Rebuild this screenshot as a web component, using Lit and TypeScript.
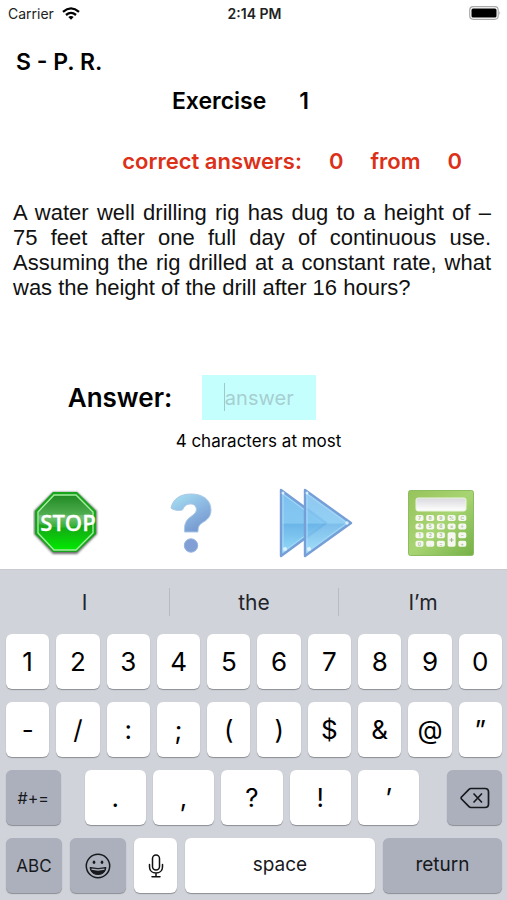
import { LitElement, html, css, svg } from "lit";
import { customElement, property } from "lit/decorators.js";

const stopIcon = svg`
  <svg viewBox="0 0 66 66" width="66" height="66" aria-hidden="true">
    <defs>
      <linearGradient id="sg" x1="0" y1="0" x2="0" y2="1">
        <stop offset="0" stop-color="#1f8a22" /><stop offset=".42" stop-color="#58b458" />
        <stop offset=".56" stop-color="#17a417" /><stop offset="1" stop-color="#00ea00" />
      </linearGradient>
      <filter id="sb" x="-20%" y="-20%" width="140%" height="140%"><feGaussianBlur stdDeviation="1.2" /></filter>
    </defs>
    <path d="M20 2H44L64 21V44L44 64H20L1 44V21Z" fill="#333" opacity=".7" filter="url(#sb)" />
    <path d="M20 2H44L63 21V44L44 62H20L2 44V21Z" fill="#16a51b" />
    <path d="M21 5H43L60 22V43L43 60H21L5 43V22Z" fill="url(#sg)" stroke="#a5eda0" stroke-width="1.4" />
    <path d="M6 34Q32 42 59 32V25H6Z" fill="#fff" opacity=".14" />
    <text x="35" y="41" text-anchor="middle" font-family="Open Sans, Noto Sans, sans-serif" font-weight="600" font-size="22" fill="#fff" stroke="#fff" stroke-width=".3">STOP</text>
  </svg>`;

const helpIcon = svg`
  <svg viewBox="0 0 42 60" width="42" height="60" aria-hidden="true">
    <defs>
      <linearGradient id="qg" x1="0" y1="0" x2=".6" y2="1">
        <stop offset="0" stop-color="#a9e4f1" /><stop offset=".5" stop-color="#8fbce4" /><stop offset="1" stop-color="#7799d0" />
      </linearGradient>
    </defs>
    <path d="M1 15C3 6 10 1 21 1C33 1 41 7 41 17C41 24 37 27 32 30C29 32 28 34 28 39H14.500C14 31 16 27 21 23.500C26 20 27 18 26 14.500C25 10 18 10 15 13C13 15 13 17 12 17C8 18 3 17 1 15Z" fill="url(#qg)" stroke="#a9c9e8" stroke-width="1" />
    <circle cx="21" cy="52.500" r="6.700" fill="#829fd5" stroke="#94b4e0" />
  </svg>`;

const nextIcon = svg`
  <svg viewBox="0 0 74 70" width="74" height="70" aria-hidden="true">
    <defs>
      <linearGradient id="ng" x1="0" y1="0" x2="0" y2="1">
        <stop offset="0" stop-color="#7fc0ee" /><stop offset=".5" stop-color="#84c8f2" />
        <stop offset=".52" stop-color="#6cb5e8" /><stop offset="1" stop-color="#98defa" />
      </linearGradient>
    </defs>
    <g stroke-linejoin="round">
      <path d="M2 2L47 35L2 68Z" fill="url(#ng)" stroke="#769fd8" stroke-width="2.400" />
      <path d="M4 6L43 35L4 64Z" fill="none" stroke="#a9daf8" stroke-width="1" />
      <path d="M26 2L72 35L26 68Z" fill="url(#ng)" fill-opacity=".88" stroke="#769fd8" stroke-width="2.400" />
      <path d="M28 6L68 35L28 64Z" fill="none" stroke="#a9daf8" stroke-width="1" />
    </g>
    <g fill="#eaf8ff" opacity=".85">
      <circle cx="4" cy="5" r="1.500" /><circle cx="28" cy="5" r="1.500" /><circle cx="68" cy="35" r="1.700" />
      <circle cx="6" cy="61" r="2" /><circle cx="30" cy="61" r="2" />
    </g>
  </svg>`;

const calcRows = ["789%C", "456×÷", "123 −", "0.= +"];
const calcIcon = svg`
  <svg viewBox="0 0 66 66" width="66" height="66" aria-hidden="true">
    <defs>
      <linearGradient id="cg" x1="0" y1="0" x2="1" y2="1">
        <stop offset="0" stop-color="#96c35a" /><stop offset=".5" stop-color="#a8d573" /><stop offset="1" stop-color="#74b046" />
      </linearGradient>
      <linearGradient id="cd" x1="0" y1="0" x2="0" y2="1">
        <stop offset="0" stop-color="#d9d9de" /><stop offset="1" stop-color="#fff" />
      </linearGradient>
    </defs>
    <rect x=".500" y=".500" width="65" height="65" rx="2" fill="url(#cg)" stroke="#8dbd60" />
    <rect x="8" y="8" width="50" height="13" rx="2" fill="url(#cd)" stroke="#e9f3dc" />
    ${calcRows.map((row, r) => [...row].map((c, i) => i === 3 && r > 1 ? null : svg`
      <rect x=${7.5 + i * 10.7} y=${25 + r * 8.6} width="8" height="6" rx="1.800" fill="#f6f8f0" />
      <text x=${11.5 + i * 10.7} y=${29.8 + r * 8.6} text-anchor="middle" font-family="Inter, sans-serif" font-weight="600" font-size="5" fill="#a9bb93">${c}</text>`))}
    <rect x="39.600" y="42.200" width="8" height="14.600" rx="1.800" fill="#f6f8f0" />
    <path d="M41.600 50H45.600M43.600 48V52" stroke="#a0b488" />
  </svg>`;

const emojiIcon = svg`
  <svg viewBox="0 0 26 26" width="26" height="26" fill="none" stroke="#17191d" aria-hidden="true">
    <circle cx="13" cy="13" r="11.700" stroke-width="1.500" />
    <g fill="#17191d" stroke="none"><ellipse cx="9" cy="9.300" rx="1.300" ry="1.700" /><ellipse cx="17" cy="9.300" rx="1.300" ry="1.700" /></g>
    <path d="M5 14.500Q13 16.500 21 14.500Q20 21.500 13 21.500Q6 21.500 5 14.500Z" fill="#17191d" />
    <path d="M6.500 16.200Q13 17.800 19.500 16.200" stroke="#abb0bc" stroke-width="1.300" />
  </svg>`;

const micIcon = svg`
  <svg viewBox="0 0 16 24" width="16" height="24" fill="none" stroke="#111" stroke-width="1.500" stroke-linecap="round" aria-hidden="true">
    <rect x="4.500" y="1" width="7" height="15" rx="3.500" />
    <path d="M1.500 10.500V13C1.500 21 14.500 21 14.500 13V10.500M8 19V22.500M4 22.700H12" />
  </svg>`;

const deleteIcon = svg`
  <svg viewBox="0 0 30 22" width="30" height="22" fill="none" stroke="#17191d" stroke-width="1.700" stroke-linejoin="round" stroke-linecap="round" aria-hidden="true">
    <path d="M11 1.500H25Q28.500 1.500 28.500 5V17Q28.500 20.500 25 20.500H11Q9.800 20.500 9 19.700L1.500 12Q.8 11 1.500 10L9 2.300Q9.800 1.500 11 1.500Z" />
    <path d="M14 7L21.500 15M21.500 7L14 15" />
  </svg>`;

@customElement("status-bar")
class StatusBar extends LitElement {
  static styles = css`
    :host { display: grid; grid-template-columns: 1fr auto 1fr; align-items: center; height: 26px; padding: 0 6px 0 8px; font-size: 14px; color: #222; }
    .carrier { display: flex; align-items: center; gap: 8px; }
    .time { font-weight: 600; }
    .battery { justify-self: end; }
    svg { display: block; }
  `;
  render() {
    return html`
      <div class="carrier"><span>Carrier</span>
        <svg viewBox="0 0 18 13" width="18" height="13" aria-label="Wi-Fi">
          <g fill="none" stroke="#000" stroke-width="2.300"><path d="M1 4.800Q9 -2 17 4.800M4 8Q9 3.800 14 8" /></g>
          <path d="M6.300 10Q9 8 11.700 10L9 12.800Z" />
        </svg>
      </div>
      <span class="time">2:14 PM</span>
      <svg class="battery" viewBox="0 0 32 14" width="32" height="14" aria-label="Battery full">
        <rect x=".700" y=".700" width="28.500" height="12.600" rx="3.500" fill="#fff" stroke="#aaa" stroke-width="1.200" />
        <rect x="2.500" y="2.500" width="25" height="9" rx="1.500" />
        <path d="M30.500 5Q32 7 30.500 9Z" fill="#999" />
      </svg>`;
  }
}

@customElement("key-board")
class KeyBoard extends LitElement {
  static styles = css`
    :host { display: block; background: #d1d3da; border-top: 1px solid #c9cad0; padding: 0 5px 7px 6px; box-sizing: border-box; }
    button { font: inherit; color: inherit; border: 0; padding: 0; margin: 0; background: none; }
    .suggestions { display: grid; grid-template-columns: 1fr 1fr 1fr; height: 64px; align-items: center; font-size: 21px; margin: 0 -5px 0 -6px; color: #22242a; }
    .suggestions button { height: 28px; border-left: 1px solid #b8bbc3; }
    .suggestions button:first-child { border-left: 0; }
    .rows { display: flex; flex-direction: column; gap: 13px; }
    .row { display: flex; gap: 7px; }
    .key { flex: 1 1 0; min-width: 0; height: 55px; border-radius: 6px; background: #fff; box-shadow: 0 1px 1px #8b8d94; font-size: 26px; color: #000; display: flex; align-items: center; justify-content: center; }
    .dark { background: #abb0bc; color: #17191d; }
    .small { flex: 0 0 11%; font-size: 16px; }
    .word { font-size: 19px; color: #17191d; padding-bottom: 2px; }
    .middle { flex: 1; display: flex; gap: 7px; margin: 0 21px 0 17px; }
    .abc { flex: 0 0 56px; font-size: 17px; }
    .mic { flex: 0 0 43px; }
    .return { flex: 0 0 24%; }
    .bottom { gap: 8px; }
  `;
  render() {
    const key = (k: string) => html`<button class="key">${k}</button>`;
    return html`
      <div class="suggestions"><button>I</button><button>the</button><button>I’m</button></div>
      <div class="rows">
        <div class="row">${[..."1234567890"].map(key)}</div>
        <div class="row">${[..."-/:;()$&@”"].map(key)}</div>
        <div class="row">
          <button class="key dark small">#+=</button>
          <div class="middle">${[...".,?!’"].map(key)}</div>
          <button class="key dark small" aria-label="Delete">${deleteIcon}</button>
        </div>
        <div class="row bottom">
          <button class="key dark abc">ABC</button>
          <button class="key dark abc" aria-label="Emoji">${emojiIcon}</button>
          <button class="key mic" aria-label="Dictate">${micIcon}</button>
          <button class="key word">space</button>
          <button class="key dark word return">return</button>
        </div>
      </div>`;
  }
}

@customElement("app-root")
class AppRoot extends LitElement {
  @property({ type: Number }) exercise = 1;
  @property({ type: Number }) correct = 0;
  @property({ type: Number }) total = 0;

  static styles = css`
    :host { display: flex; flex-direction: column; min-height: 100vh; background: #fff; color: #000; font-family: Inter, "Liberation Sans", sans-serif; }
    main { flex: 1; display: flex; flex-direction: column; }
    h1, h2, p { margin: 0; font-weight: 600; }
    h1 { font-size: 23px; line-height: 28px; padding: 22px 16px 0; }
    h2 { display: flex; justify-content: center; gap: 33px; font-size: 23px; line-height: 28px; margin-top: 11px; padding-right: 26px; }
    .score { display: flex; justify-content: flex-end; gap: 27px; margin-top: 32px; padding-right: 45px; font-size: 22px; line-height: 28px; font-weight: 600; color: #dc3018; }
    .problem { font: 22px/25px "Liberation Sans", Arial, sans-serif; text-align: justify; color: #111; margin: 25px 16px 0 13px; }
    .entry { display: flex; justify-content: center; align-items: center; gap: 30px; margin-top: 75px; padding-right: 123px; }
    .entry label { font-size: 26px; font-weight: 600; }
    .field { position: relative; width: 114px; height: 45px; }
    input { width: 100%; height: 100%; box-sizing: border-box; border: 0; padding: 0; background: #c5fffd; font: 20px Inter, sans-serif; text-align: center; outline: none; }
    input::placeholder { color: #a6cfd1; opacity: 1; }
    .caret { position: absolute; left: 22px; top: 8px; width: 1px; height: 28px; background: #9cc9cc; }
    .hint { text-align: center; font-size: 17px; line-height: 20px; font-weight: 400; margin-top: 11px; padding-left: 10px; }
    .actions { display: grid; grid-template-columns: repeat(4, 1fr); justify-items: center; align-items: center; margin: 37px 4px 9px 4px; }
    .actions button { border: 0; padding: 0; background: none; display: block; }
    .actions svg { display: block; }
  `;
  render() {
    return html`
      <status-bar></status-bar>
      <main>
        <h1>S - P. R.</h1>
        <h2><span>Exercise</span><span>${this.exercise}</span></h2>
        <div class="score"><span>correct answers:</span><span>${this.correct}</span><span>from</span><span>${this.total}</span></div>
        <p class="problem">A water well drilling rig has dug to a height of –75 feet after one full day of continuous use. Assuming the rig drilled at a constant rate, what was the height of the drill after 16 hours?</p>
        <div class="entry">
          <label for="answer">Answer:</label>
          <div class="field"><input id="answer" type="text" maxlength="4" placeholder="answer" aria-describedby="hint" /><span class="caret"></span></div>
        </div>
        <p class="hint" id="hint">4 characters at most</p>
        <div class="actions">
          <button aria-label="Stop">${stopIcon}</button>
          <button aria-label="Help">${helpIcon}</button>
          <button aria-label="Next exercise">${nextIcon}</button>
          <button aria-label="Calculator">${calcIcon}</button>
        </div>
      </main>
      <key-board></key-board>`;
  }
}
